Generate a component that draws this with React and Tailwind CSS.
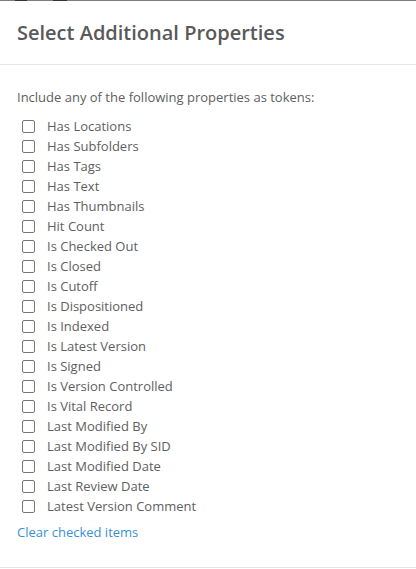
import React from "react";

const items = [
  "Has Locations",
  "Has Subfolders",
  "Has Tags",
  "Has Text",
  "Has Thumbnails",
  "Hit Count",
  "Is Checked Out",
  "Is Closed",
  "Is Cutoff",
  "Is Dispositioned",
  "Is Indexed",
  "Is Latest Version",
  "Is Signed",
  "Is Version Controlled",
  "Is Vital Record",
  "Last Modified By",
  "Last Modified By SID",
  "Last Modified Date",
  "Last Review Date",
  "Latest Version Comment",
];

export default function App() {
  return (
    <div
      className="w-[416px] h-[569px] bg-white flex flex-col overflow-hidden"
      style={{ fontFamily: '"Open Sans", "Noto Sans", sans-serif' }}
    >
      <div className="flex h-px shrink-0 bg-[#7d7d7d]">
        <div className="w-[15px]" />
        <div className="w-[12px] bg-[#333]" />
        <div className="w-[26px]" />
        <div className="w-[14px] bg-[#333]" />
      </div>
      <div className="h-[64px] shrink-0 flex items-center px-[17px] border-b border-[#e5e5e5]">
        <h1 className="text-[20px] font-semibold text-[#595959] leading-[27px]">
          Select Additional Properties
        </h1>
      </div>
      <div className="flex-1 flex flex-col px-[17px] pt-[22px]">
        <p className="text-[13px] leading-5 text-[#606060]">
          Include any of the following properties as tokens:
        </p>
        <ul className="mt-[9px] flex flex-col">
          {items.map((label) => (
            <li key={label} className="h-5 flex items-center">
              <span className="ml-[5px] w-[13px] h-[13px] border border-[#777] rounded-[2px] bg-white" />
              <span className="ml-[12px] text-[13px] leading-5 text-[#606060]">{label}</span>
            </li>
          ))}
        </ul>
        <a className="mt-[6px] text-[13px] leading-5 text-[#3a8fd6] cursor-pointer">
          Clear checked items
        </a>
      </div>
      <div className="h-[2px] shrink-0 border-t border-[#e3e3e3]" />
    </div>
  );
}
